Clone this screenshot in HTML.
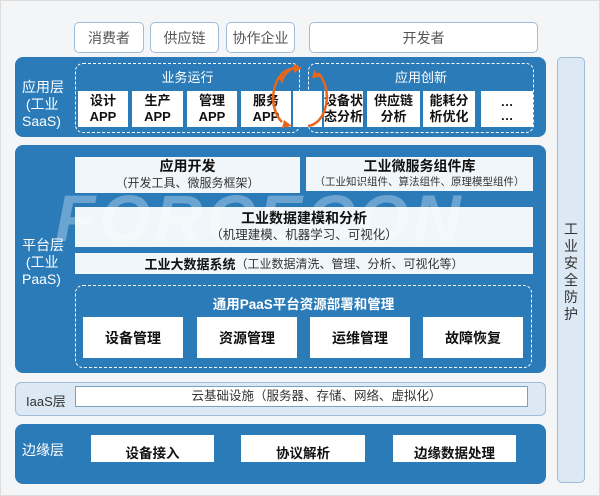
<!DOCTYPE html>
<html><head><meta charset="utf-8"><style>
*{margin:0;padding:0;box-sizing:border-box}
body{width:600px;height:496px;background:#f4f5f6;position:relative;overflow:hidden;font-family:"Liberation Sans","Noto Sans CJK SC",sans-serif}
.a{position:absolute}
.top{border:1px solid #9fbcd8;border-radius:5px;background:#fff;color:#555;font-size:14px;display:flex;align-items:center;justify-content:center}
.pan{background:#2b7bb9;border-radius:8px}
.w{background:#fff;display:flex;flex-direction:column;align-items:center;justify-content:center;color:#111;font-weight:bold;text-align:center}
.lab{color:#fff;font-size:14px;line-height:17px;text-align:left;white-space:nowrap}
.dash{border:1.5px dashed #fff;border-radius:8px}
.sub{font-weight:normal;color:#333}
</style></head><body>
<div class="a" style="left:0;top:0;width:600px;height:496px;border:1px solid #ddd"></div>
<div class="a top" style="left:74px;top:22px;width:70px;height:31px">消费者</div>
<div class="a top" style="left:150px;top:22px;width:69px;height:31px">供应链</div>
<div class="a top" style="left:226px;top:22px;width:69px;height:31px">协作企业</div>
<div class="a top" style="left:309px;top:22px;width:229px;height:31px">开发者</div>

<div class="a" style="left:557px;top:57px;width:28px;height:426px;background:#dce8f4;border:1px solid #9fbcd8;border-radius:5px;color:#333;font-size:14px;line-height:17px;text-align:center;padding-top:163px">工<br>业<br>安<br>全<br>防<br>护</div>

<!-- SaaS -->
<div class="a pan" style="left:15px;top:57px;width:531px;height:80px"></div>
<div class="a lab" style="left:22px;top:79px">应用层<br>&nbsp;(工业<br>SaaS)</div>
<div class="a dash" style="left:75px;top:63px;width:225px;height:70px"></div>
<div class="a dash" style="left:308px;top:63px;width:226px;height:70px"></div>
<div class="a" style="left:75px;top:67px;width:225px;text-align:center;color:#fff;font-size:13px">业务运行</div>
<div class="a" style="left:308px;top:67px;width:226px;text-align:center;color:#fff;font-size:13px">应用创新</div>
<div class="a w" style="left:78px;top:91px;width:50px;height:36px;font-size:13px;line-height:16px">设计<br>APP</div>
<div class="a w" style="left:132px;top:91px;width:51px;height:36px;font-size:13px;line-height:16px">生产<br>APP</div>
<div class="a w" style="left:187px;top:91px;width:50px;height:36px;font-size:13px;line-height:16px">管理<br>APP</div>
<div class="a w" style="left:241px;top:91px;width:50px;height:36px;font-size:13px;line-height:16px">服务<br>APP</div>
<div class="a w" style="left:293px;top:91px;width:29px;height:36px"></div>
<div class="a w" style="left:324px;top:91px;width:39px;height:36px;font-size:13px;line-height:16px">设备状<br>态分析</div>
<div class="a w" style="left:367px;top:91px;width:53px;height:36px;font-size:13px;line-height:16px">供应链<br>分析</div>
<div class="a w" style="left:423px;top:91px;width:52px;height:36px;font-size:13px;line-height:16px">能耗分<br>析优化</div>
<div class="a w" style="left:481px;top:91px;width:52px;height:36px;font-size:13px;line-height:14px">…<br>…</div>
<svg class="a" style="left:270px;top:60px" width="60" height="75" viewBox="0 0 60 75">
<g fill="none" stroke="#e8651c" stroke-width="2.5">
<path d="M22 9 A20 29 0 0 0 12 62"/><path d="M38 66 A20 29 0 0 0 48 13"/>
<path d="M12 20 A20 29 0 0 1 28 7"/></g>
<g fill="#e8651c"><polygon points="24,4 32,8 24,13"/><polygon points="8,16 15,16 12,24"/>
<polygon points="14,60 22,66 12,68"/><polygon points="44,10 50,17 42,18"/></g>
</svg>

<!-- PaaS -->
<div class="a pan" style="left:15px;top:145px;width:531px;height:228px"></div>
<div class="a" style="left:55px;top:180px;font-size:66px;font-weight:bold;color:rgba(150,190,225,.6);letter-spacing:4px;font-style:italic">FORCECON</div>
<div class="a lab" style="left:22px;top:237px">平台层<br>&nbsp;(工业<br>PaaS)</div>
<div class="a w" style="left:75px;top:157px;width:225px;height:36px;font-size:14px;line-height:17px;background:rgba(255,255,255,.93)">应用开发<span class="sub" style="font-size:12px">（开发工具、微服务框架）</span></div>
<div class="a w" style="left:306px;top:157px;width:227px;height:34px;font-size:14px;line-height:16px;background:rgba(255,255,255,.93)">工业微服务组件库<span class="sub" style="font-size:10.5px">（工业知识组件、算法组件、原理模型组件）</span></div>
<div class="a w" style="left:75px;top:207px;width:458px;height:40px;font-size:14px;line-height:17px;background:rgba(255,255,255,.93)">工业数据建模和分析<span class="sub" style="font-size:12.5px">（机理建模、机器学习、可视化）</span></div>
<div class="a w" style="left:75px;top:253px;width:458px;height:21px;font-size:13px;flex-direction:row;background:rgba(255,255,255,.93)">工业大数据系统<span class="sub" style="font-size:12px">（工业数据清洗、管理、分析、可视化等）</span></div>
<div class="a dash" style="left:75px;top:285px;width:457px;height:83px"></div>
<div class="a" style="left:75px;top:293px;width:457px;text-align:center;color:#fff;font-size:13.5px;font-weight:bold">通用PaaS平台资源部署和管理</div>
<div class="a w" style="left:83px;top:317px;width:100px;height:41px;font-size:14px">设备管理</div>
<div class="a w" style="left:197px;top:317px;width:100px;height:41px;font-size:14px">资源管理</div>
<div class="a w" style="left:310px;top:317px;width:100px;height:41px;font-size:14px">运维管理</div>
<div class="a w" style="left:423px;top:317px;width:100px;height:41px;font-size:14px">故障恢复</div>

<!-- IaaS -->
<div class="a" style="left:15px;top:382px;width:531px;height:34px;background:#dce8f4;border:1px solid #9fbcd8;border-radius:6px"></div>
<div class="a" style="left:26px;top:391px;font-size:13px;color:#333">IaaS层</div>
<div class="a" style="left:75px;top:386px;width:453px;height:21px;background:#fff;border:1px solid #7d9fc2;font-size:12.5px;color:#333;text-align:center;line-height:19px;padding-left:30px">云基础设施（服务器、存储、网络、虚拟化）</div>

<!-- Edge -->
<div class="a pan" style="left:15px;top:424px;width:531px;height:60px"></div>
<div class="a lab" style="left:22px;top:442px">边缘层</div>
<div class="a w" style="left:91px;top:435px;width:123px;height:27px;font-size:13.5px;padding-top:6px">设备接入</div>
<div class="a w" style="left:241px;top:435px;width:124px;height:27px;font-size:13.5px;padding-top:6px">协议解析</div>
<div class="a w" style="left:393px;top:435px;width:123px;height:27px;font-size:13.5px;padding-top:6px">边缘数据处理</div>
</body></html>
